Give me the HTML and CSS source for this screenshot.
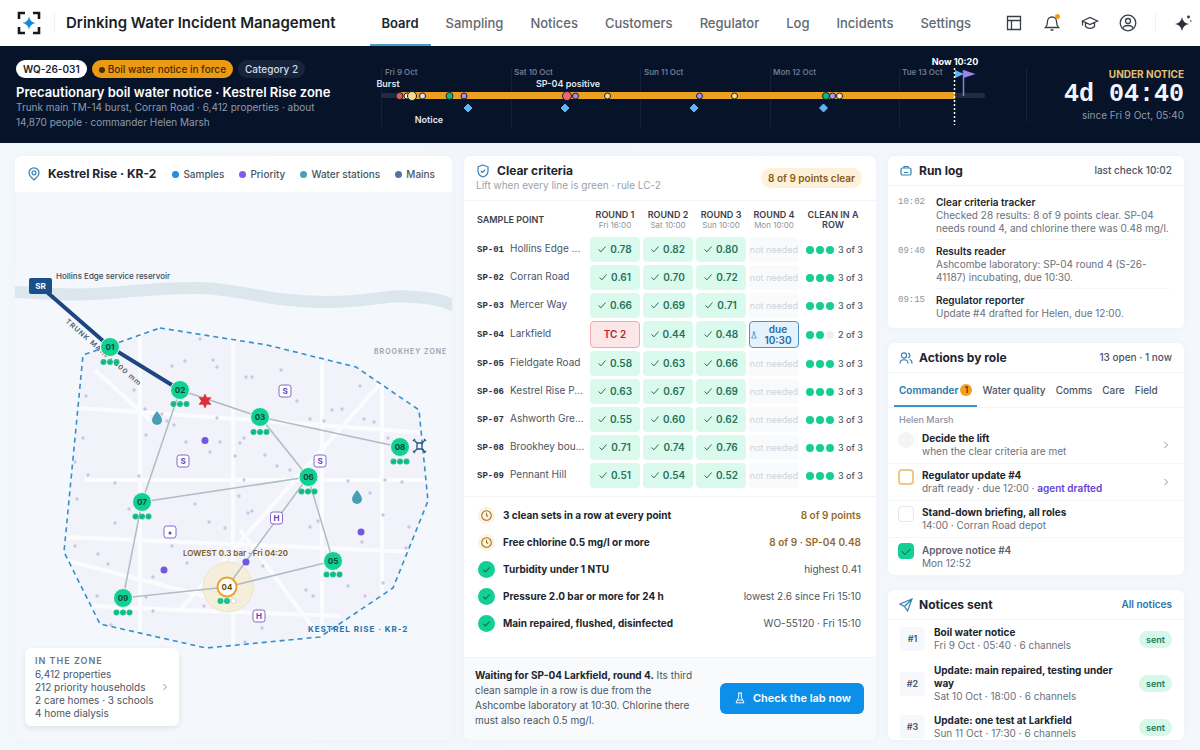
FILE: index.html
```html
<!DOCTYPE html>
<html lang="en">
<head>
<meta charset="utf-8">
<meta name="viewport" content="width=device-width, initial-scale=1">
<title>Drinking Water Incident Management</title>
<link rel="stylesheet" href="styles.css">
</head>
<body>
<header class="topbar">
  <svg class="logo" viewBox="0 0 24 24" aria-hidden="true"><path d="M2 8V2h6M16 2h6v6M22 16v6h-6M8 22H2v-6" fill="none" stroke="#14181f" stroke-width="2.6"/><path d="M12 5.500Q13 11 18.500 12Q13 13 12 18.500Q11 13 5.500 12Q11 11 12 5.500Z" fill="#1689dc"/></svg>
  <h1 class="brand">Drinking Water Incident Management</h1>
  <nav class="nav">
    <a class="nav-link active" href="#board">Board</a>
    <a class="nav-link" href="#sampling">Sampling</a>
    <a class="nav-link" href="#notices">Notices</a>
    <a class="nav-link" href="#customers">Customers</a>
    <a class="nav-link" href="#regulator">Regulator</a>
    <a class="nav-link" href="#log">Log</a>
    <a class="nav-link" href="#incidents">Incidents</a>
    <a class="nav-link" href="#settings">Settings</a>
  </nav>
  <div class="tools">
    <button class="tool" aria-label="Layout"><svg viewBox="0 0 18 18"><path d="M2.500 2.500h13v13h-13zM2.500 6.500h13M6.500 6.500v9"/></svg></button>
    <button class="tool" aria-label="Alerts"><svg viewBox="0 0 18 18"><path d="M2.500 13.500c1.500-1.500 2-2.500 2-6a4.500 4.500 0 0 1 9 0c0 3.500.500 4.500 2 6zM7.500 16h3"/><circle cx="14.500" cy="2.500" r="2.500" fill="#f39c12" stroke="none"/></svg></button>
    <button class="tool" aria-label="Training"><svg viewBox="0 0 18 18"><path d="M1.500 7 9 3.500 16.500 7 9 10.500zM4.500 8.500v4c2 2.500 7 2.500 9 0v-4M1.500 7.500v4"/></svg></button>
    <button class="tool" aria-label="Account"><svg viewBox="0 0 18 18"><circle cx="9" cy="9" r="7.800"/><circle cx="9" cy="7" r="2.500"/><path d="M4 14.500c.500-4 9.500-4 10 0"/></svg></button>
  </div>
  <button class="tool assist" aria-label="Assistant"><svg viewBox="0 0 18 18"><path d="M8 3Q9 9 15 10Q9 11 8 17Q7 11 1 10Q7 9 8 3Z" fill="#2c3038" stroke="none"/><circle cx="14.500" cy="3" r="1.400" fill="#2c3038" stroke="none"/><circle cx="16.800" cy="7" r=".8" fill="#2c3038" stroke="none"/></svg></button>
</header>

<section class="banner">
  <div class="incident">
    <div class="chips"><span class="chip id">WQ-26-031</span><span class="chip force">Boil water notice in force</span><span class="chip cat">Category 2</span></div>
    <h2 class="incident-title">Precautionary boil water notice · Kestrel Rise zone</h2>
    <p class="incident-text">Trunk main TM-14 burst, Corran Road · 6,412 properties · about 14,870 people · commander Helen Marsh</p>
  </div>
  <svg class="timeline" viewBox="370 46 640 97" role="img" aria-label="Incident timeline">
    <path d="M381.500 68v59M511.500 68v59M640.500 68v59M770.500 68v59M899.500 68v59" stroke="#15213a"/>
    <g class="tl-day"><text x="385" y="75">Fri 9 Oct</text><text x="514" y="75">Sat 10 Oct</text><text x="644" y="75">Sun 11 Oct</text><text x="773" y="75">Mon 12 Oct</text><text x="902" y="75">Tue 13 Oct</text></g>
    <rect x="381" y="93" width="604" height="5" rx="2" fill="#212c42"/>
    <rect x="400" y="92" width="555" height="7" fill="#eba11f"/>
    <g class="tl-label"><text x="388" y="87">Burst</text><text x="568" y="87">SP-04 positive</text><text x="429" y="123">Notice</text></g>
    <text class="tl-now" x="955" y="65">Now 10:20</text>
    <g stroke="#13203a">
      <circle cx="399.500" cy="96" r="3.500" fill="#e5584f"/><circle cx="407" cy="96" r="3" fill="#f1f5f9"/><circle cx="422.500" cy="96" r="3" fill="#e4dcf5"/><circle cx="412" cy="96" r="4.500" fill="#fbd98a"/>
      <circle cx="449.500" cy="96" r="3.500" fill="#10b981"/><circle cx="464" cy="96" r="3" fill="#a78bfa"/><circle cx="575.500" cy="96" r="3" fill="#b18ae0"/><circle cx="567" cy="96" r="4.500" fill="#f0646a"/><circle cx="607.500" cy="96" r="3" fill="#fbd98a"/>
      <circle cx="699.500" cy="96" r="3" fill="#a78bfa"/><circle cx="734.500" cy="96" r="3" fill="#fbd98a"/><circle cx="826" cy="96" r="3.500" fill="#10b981"/><circle cx="832.500" cy="96" r="3" fill="#b79af0"/><circle cx="839.500" cy="96" r="3" fill="#f7e2bd"/>
    </g>
    <path d="M468 104l4 4-4 4-4-4zM565 104l4 4-4 4-4-4zM694 104l4 4-4 4-4-4zM823.500 104l4 4-4 4-4-4z" fill="#62b5f4" stroke="#62b5f4" stroke-linejoin="round"/>
    <path d="M955 70l9 4-9 4z" fill="#5cb3f5"/><path d="M963.500 70v26" stroke="#8f7be0" stroke-width="1.500"/><path d="M963.500 70l12 4-12 4z" fill="#9a82ea"/>
    <path d="M954.500 68v57" stroke="#fff" stroke-width="1.500" stroke-dasharray="2 2"/>
  </svg>
  <div class="clock"><span class="clock-label">UNDER NOTICE</span><strong class="clock-time">4d 04:40</strong><span class="clock-since">since Fri 9 Oct, 05:40</span></div>
</section>

<main class="board">
  <section class="card map-card">
    <div class="map-head">
      <svg class="icon" viewBox="0 0 14 14"><path d="M7 13C4 10.500 2 8.500 2 5.800a5 5 0 0 1 10 0C12 8.500 10 10.500 7 13z"/><circle cx="7" cy="5.800" r="2"/></svg>
      <h3>Kestrel Rise · KR-2</h3>
      <ul class="legend"><li class="c-blue">Samples</li><li class="c-violet">Priority</li><li class="c-teal">Water stations</li><li class="c-slate">Mains</li></ul>
    </div>
    <div class="map-body">
      <svg class="map" viewBox="15 192 437 548" role="img" aria-label="Map of Kestrel Rise zone">
        <defs>
          <g id="dots"><circle cx="-6.500" r="3"/><circle r="3"/><circle cx="6.500" r="3"/><path d="M-8 0l1 1 2-2M-1.500 0l1 1 2-2M5 0l1 1 2-2" fill="none" stroke="#0a8f66" stroke-width=".8"/></g>
          <path id="drop" d="M0-7Q5-1 5 2A5 5 0 0 1-5 2Q-5-1 0-7Z"/>
          <rect id="tag" x="-6" y="-6" width="12" height="12" rx="2.500"/>
          <clipPath id="zone"><path d="M160 328 267 345 356 367 419 410 428 501 393 588 320 637 206 648 100 624 64 552 83 355Z"/></clipPath>
        </defs>
        <path d="M10 292C40 292 60 296 95 294S160 287 200 288 270 302 325 302 380 294 415 297 440 302 456 306" fill="none" stroke="#dbe7ed" stroke-width="12"/>
        <g clip-path="url(#zone)">
          <path d="M60 320h380v340H60z" fill="#f2f3fa"/>
          <g fill="none" stroke="#fbfcfe" stroke-width="4"><path d="M60 407 140 412 440 434M85 480h355M64 537 440 553M70 605 180 610 340 616M140 325V650M233 325V650M322 340V640M382 370V600M95 370 150 420M180 610 410 350M240 530 320 637M64 560 220 600"/></g>
        </g>
        <path d="M160 328 267 345 356 367 419 410 428 501 393 588 320 637 206 648 100 624 64 552 83 355Z" fill="none" stroke="#3490c8" stroke-width="1.600" stroke-dasharray="5 4"/>
        <g fill="#cbc5e6">
          <circle cx="200" cy="339" r="1.700"/><circle cx="172" cy="366" r="1.700"/><circle cx="185" cy="361" r="1.700"/><circle cx="213" cy="360" r="1.700"/><circle cx="217" cy="367" r="1.700"/><circle cx="86" cy="396" r="1.700"/><circle cx="134" cy="390" r="1.700"/><circle cx="145" cy="409" r="1.700"/><circle cx="162" cy="414" r="1.700"/><circle cx="167" cy="421" r="1.700"/><circle cx="174" cy="425" r="1.700"/><circle cx="146" cy="435" r="1.700"/><circle cx="83" cy="438" r="1.700"/><circle cx="217" cy="418" r="1.700"/><circle cx="186" cy="442" r="1.700"/><circle cx="220" cy="442" r="1.700"/><circle cx="210" cy="452" r="1.700"/><circle cx="235" cy="456" r="1.700"/><circle cx="75" cy="462" r="1.700"/><circle cx="88" cy="475" r="1.700"/><circle cx="139" cy="476" r="1.700"/><circle cx="115" cy="483" r="1.700"/><circle cx="77" cy="499" r="1.700"/><circle cx="129" cy="509" r="1.700"/><circle cx="195" cy="504" r="1.700"/><circle cx="115" cy="523" r="1.700"/><circle cx="209" cy="522" r="1.700"/><circle cx="225" cy="528" r="1.700"/><circle cx="246" cy="377" r="1.700"/><circle cx="252" cy="377" r="1.700"/><circle cx="281" cy="370" r="1.700"/><circle cx="297" cy="401" r="1.700"/><circle cx="332" cy="410" r="1.700"/><circle cx="342" cy="409" r="1.700"/><circle cx="360" cy="386" r="1.700"/><circle cx="310" cy="419" r="1.700"/><circle cx="324" cy="421" r="1.700"/><circle cx="364" cy="419" r="1.700"/><circle cx="374" cy="422" r="1.700"/><circle cx="388" cy="438" r="1.700"/><circle cx="244" cy="438" r="1.700"/><circle cx="240" cy="443" r="1.700"/><circle cx="265" cy="455" r="1.700"/><circle cx="277" cy="466" r="1.700"/><circle cx="290" cy="470" r="1.700"/><circle cx="348" cy="481" r="1.700"/><circle cx="385" cy="480" r="1.700"/><circle cx="402" cy="482" r="1.700"/><circle cx="370" cy="493" r="1.700"/><circle cx="383" cy="515" r="1.700"/><circle cx="409" cy="527" r="1.700"/><circle cx="244" cy="480" r="1.700"/><circle cx="239" cy="496" r="1.700"/><circle cx="248" cy="513" r="1.700"/><circle cx="252" cy="511" r="1.700"/><circle cx="310" cy="527" r="1.700"/><circle cx="318" cy="521" r="1.700"/><circle cx="75" cy="546" r="1.700"/><circle cx="98" cy="554" r="1.700"/><circle cx="108" cy="564" r="1.700"/><circle cx="187" cy="563" r="1.700"/><circle cx="153" cy="577" r="1.700"/><circle cx="97" cy="596" r="1.700"/><circle cx="146" cy="597" r="1.700"/><circle cx="153" cy="611" r="1.700"/><circle cx="111" cy="625" r="1.700"/><circle cx="204" cy="606" r="1.700"/><circle cx="172" cy="546" r="1.700"/><circle cx="362" cy="542" r="1.700"/><circle cx="263" cy="566" r="1.700"/><circle cx="246" cy="594" r="1.700"/><circle cx="306" cy="590" r="1.700"/><circle cx="313" cy="596" r="1.700"/><circle cx="348" cy="586" r="1.700"/><circle cx="365" cy="596" r="1.700"/><circle cx="383" cy="583" r="1.700"/><circle cx="406" cy="548" r="1.700"/><circle cx="262" cy="628" r="1.700"/><circle cx="245" cy="642" r="1.700"/>
        </g>
        <circle cx="228" cy="587" r="25" fill="#f5eedb" stroke="#f0e4c3"/>
        <path d="M142 502 308 477 260 417 180 390 142 502 123 598 227 587 308 477 333 561 227 587M260 417 400 447" fill="none" stroke="#aebcc6" stroke-width="1.500"/>
        <path d="M40 286 110 347 180 390" fill="none" stroke="#1d4580" stroke-width="4"/>
        <rect x="29" y="278" width="23" height="16" rx="2" fill="#1b4f8c"/>
        <text class="m-sr" x="40.500" y="289">SR</text>
        <text class="m-place" x="56" y="279">Hollins Edge service reservoir</text>
        <text class="m-trunk" transform="translate(65 322) rotate(41)">TRUNK MAIN · 600 mm</text>
        <text class="m-other" x="374" y="354">BROOKHEY ZONE</text>
        <text class="m-zone" x="308" y="632">KESTREL RISE · KR-2</text>
        <text class="m-low" x="183" y="556">LOWEST 0.3 bar · Fri 04:20</text>
        <path transform="translate(205 401)" d="M0-7 1.800-3.200 6-3.500 3.500 0 6 3.500 1.800 3.200 0 7-1.800 3.200-6 3.500-3.500 0-6-3.500-1.800-3.200Z" fill="#db2f3d" stroke="#db2f3d" stroke-width=".6"/>
        <use href="#drop" x="157" y="418" fill="#479fb5"/><use href="#drop" x="357" y="497" fill="#479fb5"/>
        <g fill="#7257e0"><circle cx="205" cy="440.500" r="3.500"/><circle cx="361" cy="532" r="3.500"/><circle cx="164" cy="570" r="3.500"/><circle cx="246" cy="562" r="3.500"/></g>
        <g fill="#fff" stroke="#8068c8"><use href="#tag" x="285" y="391"/><use href="#tag" x="183" y="461"/><use href="#tag" x="320" y="461"/><use href="#tag" x="276.500" y="518"/><use href="#tag" x="259" y="616"/><use href="#tag" x="170" y="532"/></g>
        <circle cx="170" cy="533" r="1.500" fill="#5b45b8"/>
        <g class="m-tag"><text x="285" y="394">S</text><text x="183" y="464">S</text><text x="320" y="464">S</text><text x="276.500" y="521">H</text><text x="259" y="619">H</text></g>
        <path d="M414 440l3 3h5l3-3M414 452l3-3h5l3 3M417 443v6M422 443v6M413 441l2-2M426 441l-2-2M413 451l2 2M426 451l-2 2" fill="none" stroke="#24507a" stroke-width="1.300"/>
        <g fill="#12cf92" stroke="#e9fbf4"><circle cx="110" cy="347" r="9.500"/><circle cx="180" cy="390" r="9.500"/><circle cx="260" cy="417" r="9.500"/><circle cx="308.500" cy="477" r="9.500"/><circle cx="400" cy="447" r="9.500"/><circle cx="142" cy="502" r="9.500"/><circle cx="333" cy="561" r="9.500"/><circle cx="123" cy="598" r="9.500"/></g>
        <circle cx="227" cy="587" r="9.500" fill="#fff" stroke="#eda226" stroke-width="2"/>
        <g fill="#19c38d"><use href="#dots" x="110" y="362"/><use href="#dots" x="180" y="404"/><use href="#dots" x="260" y="432"/><use href="#dots" x="308" y="491.500"/><use href="#dots" x="400" y="461.500"/><use href="#dots" x="142" y="516.500"/><use href="#dots" x="333" y="574.500"/><use href="#dots" x="123" y="612.500"/></g>
        <circle cx="220.500" cy="601" r="3" fill="#19c38d"/><circle cx="227" cy="601" r="3" fill="#19c38d"/><circle cx="233.500" cy="601" r="2.500" fill="#fff" stroke="#cbd5df"/>
        <g class="m-node"><text x="110" y="350">01</text><text x="180" y="393">02</text><text x="260" y="420">03</text><text x="308.500" y="480">06</text><text x="400" y="450">08</text><text x="142" y="505">07</text><text x="333" y="564">05</text><text x="123" y="601">09</text><text class="open" x="227" y="590">04</text></g>
      </svg>
      <button class="zone-info">
        <span class="zone-text"><span class="zone-label">IN THE ZONE</span><span>6,412 properties</span><span>212 priority households</span><span>2 care homes · 3 schools</span><span>4 home dialysis</span></span>
        <svg class="chev" viewBox="0 0 8 8"><path d="M2.500 1l3 3-3 3"/></svg>
      </button>
    </div>
  </section>

  <section class="card criteria">
    <div class="crit-head">
      <div>
        <h3 class="crit-title"><svg class="icon" viewBox="0 0 14 14"><path d="M7 1 12 2.800V7c0 3-2 5-5 6-3-1-5-3-5-6V2.800zM4.800 7l1.600 1.500L9.200 5.600"/></svg>Clear criteria</h3>
        <p class="crit-sub">Lift when every line is green · rule LC-2</p>
      </div>
      <span class="pill amber">8 of 9 points clear</span>
    </div>
    <table class="results">
      <thead><tr><th class="left">SAMPLE POINT</th><th>ROUND 1<small>Fri 16:00</small></th><th>ROUND 2<small>Sat 10:00</small></th><th>ROUND 3<small>Sun 10:00</small></th><th>ROUND 4<small>Mon 10:00</small></th><th class="clean">CLEAN IN A ROW</th></tr></thead>
      <tbody id="rows"></tbody>
    </table>
    <ul class="rules">
      <li><svg class="wait" viewBox="0 0 16 16"><circle cx="8" cy="8" r="4.500"/><path d="M8 5.500V8l1.500 1"/></svg><b>3 clean sets in a row at every point</b><span class="warn">8 of 9 points</span></li>
      <li><svg class="wait" viewBox="0 0 16 16"><circle cx="8" cy="8" r="4.500"/><path d="M8 5.500V8l1.500 1"/></svg><b>Free chlorine 0.5 mg/l or more</b><span class="warn">8 of 9 · SP-04 0.48</span></li>
      <li><svg class="done" viewBox="0 0 16 16"><path d="M5 8.200l2 2 4-4.200"/></svg><b>Turbidity under 1 NTU</b><span>highest 0.41</span></li>
      <li><svg class="done" viewBox="0 0 16 16"><path d="M5 8.200l2 2 4-4.200"/></svg><b>Pressure 2.0 bar or more for 24 h</b><span>lowest 2.6 since Fri 15:10</span></li>
      <li><svg class="done" viewBox="0 0 16 16"><path d="M5 8.200l2 2 4-4.200"/></svg><b>Main repaired, flushed, disinfected</b><span>WO-55120 · Fri 15:10</span></li>
    </ul>
    <div class="crit-foot">
      <p><b>Waiting for SP-04 Larkfield, round 4.</b> Its third clean sample in a row is due from the Ashcombe laboratory at 10:30. Chlorine there must also reach 0.5 mg/l.</p>
      <button class="primary"><svg viewBox="0 0 12 12"><path d="M4 1h4M4.700 1v4L2 10.800h8L7.300 5V1M3.300 8h5.400"/></svg>Check the lab now</button>
    </div>
  </section>

  <div class="side">
    <section class="card">
      <div class="side-head"><svg class="icon" viewBox="0 0 14 14"><rect x="2" y="4" width="10" height="7" rx="1.500"/><path d="M5 4V2.500h4V4M5 8.500h4"/></svg><h3>Run log</h3><span class="side-note">last check 10:02</span></div>
      <ol class="log">
        <li><time>10:02</time><div><b>Clear criteria tracker</b><p>Checked 28 results: 8 of 9 points clear. SP-04 needs round 4, and chlorine there was 0.48 mg/l.</p></div></li>
        <li><time>09:40</time><div><b>Results reader</b><p>Ashcombe laboratory: SP-04 round 4 (S-26-41187) incubating, due 10:30.</p></div></li>
        <li><time>09:15</time><div><b>Regulator reporter</b><p>Update #4 drafted for Helen, due 12:00.</p></div></li>
      </ol>
    </section>
    <section class="card">
      <div class="side-head"><svg class="icon" viewBox="0 0 14 14"><circle cx="5" cy="4.500" r="2.600"/><path d="M1 12.500c0-5 8-5 8 0M9 2a2.600 2.600 0 0 1 0 5M10.500 8.500c2 .500 2.500 2 2.500 4"/></svg><h3>Actions by role</h3><span class="side-note">13 open · 1 now</span></div>
      <div class="tabs"><button class="tab on">Commander<i>1</i></button><button class="tab">Water quality</button><button class="tab">Comms</button><button class="tab">Care</button><button class="tab">Field</button></div>
      <p class="owner">Helen Marsh</p>
      <ul class="tasks">
        <li><input class="box round" type="checkbox" id="t1" disabled><label for="t1"><b>Decide the lift</b><span>when the clear criteria are met</span></label><svg class="chev" viewBox="0 0 8 8"><path d="M2.500 1l3 3-3 3"/></svg></li>
        <li><input class="box due-box" type="checkbox" id="t2"><label for="t2"><b>Regulator update #4</b><span>draft ready · due 12:00 · <em>agent drafted</em></span></label><svg class="chev" viewBox="0 0 8 8"><path d="M2.500 1l3 3-3 3"/></svg></li>
        <li><input class="box" type="checkbox" id="t3"><label for="t3"><b>Stand-down briefing, all roles</b><span>14:00 · Corran Road depot</span></label></li>
        <li class="finished"><input class="box" type="checkbox" id="t4" checked><label for="t4"><b>Approve notice #4</b><span>Mon 12:52</span></label></li>
      </ul>
    </section>
    <section class="card">
      <div class="side-head"><svg class="icon" viewBox="0 0 14 14"><path d="M13 1 1 6l4.500 2.500L8.500 13zM13 1 5.500 8.500"/></svg><h3>Notices sent</h3><a class="side-link" href="#all">All notices</a></div>
      <ul class="sent-list">
        <li><span class="num">#1</span><div><b>Boil water notice</b><span>Fri 9 Oct · 05:40 · 6 channels</span></div><span class="pill sent">sent</span></li>
        <li><span class="num">#2</span><div><b>Update: main repaired, testing under way</b><span>Sat 10 Oct · 18:00 · 6 channels</span></div><span class="pill sent">sent</span></li>
        <li><span class="num">#3</span><div><b>Update: one test at Larkfield</b><span>Sun 11 Oct · 17:30 · 6 channels</span></div><span class="pill sent">sent</span></li>
      </ul>
    </section>
  </div>
</main>
<script src="app.js"></script>
</body>
</html>
```
FILE: styles.css
```css
* { box-sizing: border-box; }
body, h1, h2, h3, p, ul, ol { margin: 0; padding: 0; }
ul, ol { list-style: none; }
button { font: inherit; color: inherit; background: none; border: 0; padding: 0; cursor: pointer; }
a { color: inherit; text-decoration: none; }

body {
  min-height: 100vh;
  display: flex;
  flex-direction: column;
  font-family: Inter, "Liberation Sans", sans-serif;
  font-size: 10px;
  line-height: 13px;
  color: #4b5563;
  background: linear-gradient(100deg, #f1f9fb, #f3f6fb 50%, #f4f7fb);
}
b, h3 { color: #20252e; font-weight: 700; }
h3 { font-size: 12px; line-height: 16px; }

/* top bar */
.topbar { display: flex; align-items: center; height: 46px; padding: 0 8px 0 17px; background: #fff; }
.logo { width: 24px; height: 24px; flex: none; }
.brand { margin-left: 13px; padding-left: 11px; border-left: 1px solid #eef0f3; font-size: 15px; line-height: 20px; font-weight: 600; color: #1b1f27; white-space: nowrap; }
.nav { display: flex; align-self: stretch; gap: 3px; margin-left: 34px; }
.nav-link { display: flex; align-items: center; padding: 2px 12px 0; font-size: 13px; font-weight: 500; color: #626870; border-bottom: 2px solid transparent; }
.nav-link.active { font-weight: 600; color: #20252e; border-color: #4a9dcb; }
.tools { display: flex; gap: 20px; margin-left: auto; padding-right: 18px; border-right: 1px solid #eef0f3; }
.tool { width: 18px; height: 18px; }
.tool svg { display: block; width: 18px; height: 18px; fill: none; stroke: #3a3f47; stroke-width: 1.300; overflow: visible; }
.assist { margin-left: 18px; }

/* incident banner */
.banner { display: grid; grid-template-columns: 354px 1fr 174px; align-items: center; min-height: 97px; padding: 0 16px; background: #061329; }
.incident { padding-right: 40px; }
.chips { display: flex; gap: 5px; }
.chip { padding: 0 7px; border-radius: 9px; font-size: 10px; line-height: 18px; font-weight: 500; white-space: nowrap; }
.chip.id { background: #fff; color: #1d2430; font-weight: 600; }
.chip.force { background: #ec9a12; color: #472c05; }
.chip.force::before { content: ""; display: inline-block; width: 6px; height: 6px; margin-right: 3px; border-radius: 50%; background: #472c05; }
.chip.cat { background: #18243a; color: #d5dbe5; }
.incident-title { margin-top: 6px; font-size: 13px; line-height: 16px; font-weight: 600; color: #fff; white-space: nowrap; }
.incident-text { font-size: 10px; line-height: 15px; color: #8f9bad; }
.timeline { display: block; width: 100%; font-family: Inter, sans-serif; }
.tl-day { font-size: 8px; font-weight: 600; fill: #6d7a8e; }
.tl-label { font-size: 9px; font-weight: 600; fill: #e2e7ef; text-anchor: middle; }
.tl-now { font-size: 9px; font-weight: 700; fill: #fff; text-anchor: middle; }
.clock { display: flex; flex-direction: column; align-items: flex-end; margin-left: 16px; border-left: 1px solid #16233a; }
.clock-label { font-size: 10px; font-weight: 700; color: #e3bf72; }
.clock-time { font-family: "Liberation Mono", monospace; font-size: 25px; line-height: 28px; font-weight: 700; color: #f2f6fb; }
.clock-since { font-size: 10px; color: #8f9bad; }

/* board */
.board { flex: 1; display: grid; grid-template-columns: 437fr 412fr 296fr; gap: 12px; padding: 13px 16px 10px 15px; }
.card { background: #fff; border-radius: 6px; box-shadow: 0 0 4px #e6ecf388; }
.icon { width: 14px; height: 14px; flex: none; fill: none; stroke: #3481b4; stroke-width: 1.200; }
.chev { width: 8px; height: 8px; flex: none; fill: none; stroke: #8d949e; }
.pill { border-radius: 10px; font-weight: 600; white-space: nowrap; }
.pill.amber { padding: 0 7px; line-height: 20px; color: #8a5a12; background: #fdf1d9; }
.pill.sent { padding: 0 7px; font-size: 9px; line-height: 17px; color: #1d7a5c; background: #d5f8ea; }

/* map */
.map-card { display: flex; flex-direction: column; background: #f4f7fb; }
.map-head { display: flex; align-items: center; gap: 7px; min-height: 36px; padding: 0 17px 0 12px; background: #fff; border-radius: 6px 6px 0 0; }
.map-head h3 { white-space: nowrap; }
.legend { flex: 1; display: flex; justify-content: space-between; margin-left: 9px; font-weight: 500; white-space: nowrap; }
.legend li { display: flex; align-items: center; gap: 4px; color: #4b5563; }
.legend li::before { content: ""; width: 7px; height: 7px; border-radius: 50%; }
.legend .c-blue::before { background: #1e8fdb; }
.legend .c-violet::before { background: #7b5cf0; }
.legend .c-teal::before { background: #4a9fba; }
.legend .c-slate::before { background: #54759b; }
.map-body { position: relative; flex: 1; }
.map { display: block; width: 100%; font-family: Inter, sans-serif; }
.m-sr { font-size: 8px; font-weight: 700; fill: #fff; text-anchor: middle; }
.m-place { font-size: 8px; font-weight: 500; fill: #3f4a58; }
.m-trunk { font-size: 7px; font-weight: 600; letter-spacing: 1px; fill: #4d5c70; }
.m-other { font-size: 7px; font-weight: 600; letter-spacing: 1px; fill: #9aa1ab; }
.m-zone { font-size: 8px; font-weight: 700; letter-spacing: 1px; fill: #2672a8; }
.m-low { font-size: 8px; font-weight: 600; fill: #7a5a1c; }
.m-tag { font-size: 8px; font-weight: 700; fill: #5b45b8; text-anchor: middle; }
.m-node { font-size: 8px; font-weight: 700; fill: #0b4a3a; text-anchor: middle; }
.m-node .open { fill: #6b4a12; }
.zone-info { position: absolute; left: 10px; bottom: 14px; display: flex; align-items: center; width: 154px; padding: 6px 10px; text-align: left; background: #fff; border-radius: 6px; box-shadow: 0 2px 5px #dde4ec; }
.zone-text { flex: 1; display: flex; flex-direction: column; white-space: nowrap; }
.zone-label { font-size: 9px; line-height: 14px; font-weight: 600; letter-spacing: 1px; color: #66758a; }

/* clear criteria */
.criteria { display: flex; flex-direction: column; }
.crit-head { display: flex; align-items: center; justify-content: space-between; padding: 7px 14px 8px 12px; border-bottom: 1px solid #f1f3f6; }
.crit-title { display: flex; align-items: center; gap: 7px; }
.crit-sub { color: #9aa1ab; }
.results { width: calc(100% - 19px); margin: 2px 9px 5px 10px; border-collapse: separate; border-spacing: 3px; table-layout: fixed; }
.results th { padding: 0; width: 50px; height: 28px; font-size: 9px; line-height: 10px; font-weight: 600; color: #3a414c; white-space: nowrap; }
.results th.left { width: 110px; text-align: left; }
.results th.clean { width: auto; white-space: normal; }
.results small { display: block; font-size: 8px; font-weight: 400; color: #8d949e; }
.results td { padding: 0; height: 25px; text-align: center; border-radius: 4px; white-space: nowrap; }
.results .pt { text-align: left; }
.pt code { margin-right: 6px; font-family: "Liberation Mono", monospace; font-size: 9px; font-weight: 700; color: #2b313b; }
.ok { background: #dbfaee; color: #23735a; font-weight: 600; }
.tick { width: 8px; height: 8px; margin-right: 4px; fill: none; stroke: #23735a; }
.results .none { font-size: 9px; color: #ced2d9; background: #f9fafc; }
.results .bad { color: #b5262d; font-weight: 600; background: #fde6e8; border: 1px solid #efa9ae; }
.results .due { height: 27px; color: #1f6ba5; font-weight: 600; line-height: 11px; background: #e3f2fd; border: 1px solid #4a93c9; }
.due-in { display: flex; align-items: center; justify-content: space-between; padding-right: 5px; white-space: normal; }
.due-in svg { width: 8px; height: 8px; fill: none; stroke: #6ba3cc; }
.due-in span { width: 30px; }
.results .score { padding-left: 4px; }
.score-in { display: flex; align-items: center; gap: 2px; font-size: 9px; font-weight: 500; }
.score-in i { width: 8px; height: 8px; border-radius: 50%; background: #14cf93; }
.score-in i.off { background: #eef0f3; }
.score-in span { margin-left: 2px; }
.rules { padding: 5px 15px 0 14px; border-top: 1px solid #f1f3f6; }
.rules li { display: flex; align-items: center; min-height: 27px; }
.rules li b { flex: 1; margin-left: 8px; }
.rules svg { width: 17px; height: 17px; border-radius: 50%; fill: none; }
.wait { background: #fdf3df; stroke: #9a6c1f; }
.done { background: #12d093; stroke: #0b7a5a; stroke-width: 1.200; }
.warn { font-weight: 600; color: #94692a; }
.crit-foot { display: flex; align-items: center; justify-content: space-between; gap: 12px; margin-top: auto; padding: 10px 12px 12px 11px; line-height: 15px; background: #f8fafc; border-top: 1px solid #f1f3f6; border-radius: 0 0 6px 6px; }
.crit-foot p { max-width: 224px; }
.primary { display: flex; align-items: center; gap: 7px; padding: 8px 13px 8px 14px; font-size: 11px; font-weight: 600; color: #fff; background: #0b8fe8; border-radius: 6px; white-space: nowrap; }
.primary svg { width: 12px; height: 12px; fill: none; stroke: #fff; }

/* side column */
.side { display: flex; flex-direction: column; gap: 15px; }
.side-head { display: flex; align-items: center; gap: 6px; min-height: 30px; padding: 0 12px 0 11px; border-bottom: 1px solid #f1f3f6; }
.side-note { margin-left: auto; font-weight: 500; }
.side-link { margin-left: auto; font-weight: 600; color: #1f76b0; }
.log { padding: 5px 14px 4px 10px; }
.log li { display: flex; }
.log time { width: 38px; flex: none; font-family: "Liberation Mono", monospace; font-size: 9px; color: #8d949e; }
.log li div { flex: 1; padding: 5px 0 4px; border-bottom: 1px solid #f4f6f9; }
.log li time { padding-top: 5px; }
.log li:last-child div { border-bottom: 0; }
.log b { font-weight: 600; }
.log p { color: #6a717c; }
.tabs { display: flex; padding: 0 6px; border-bottom: 1px solid #f1f3f6; }
.tab { display: flex; align-items: center; gap: 2px; min-height: 34px; padding: 2px 5px 0; font-weight: 500; border-bottom: 2px solid transparent; white-space: nowrap; }
.tab.on { color: #1f76b0; font-weight: 600; border-color: #3a93cc; }
.tab i { width: 12px; font-size: 9px; line-height: 12px; font-style: normal; text-align: center; color: #5a3a08; background: #f2a01d; border-radius: 50%; }
.owner { padding: 6px 11px 1px; font-size: 9px; line-height: 12px; font-weight: 500; color: #8d949e; }
.tasks li { display: flex; align-items: center; gap: 8px; min-height: 37px; padding: 5px 14px 5px 10px; border-bottom: 1px solid #f5f7f9; }
.tasks li:last-child { border-bottom: 0; }
.tasks label { flex: 1; display: flex; flex-direction: column; color: #6a717c; }
.tasks em { font-style: normal; font-weight: 600; color: #6244d8; }
.tasks .finished b { font-weight: 600; color: #5b626d; }
.box { appearance: none; flex: none; align-self: flex-start; width: 16px; height: 16px; margin: 0; border: 1px solid #e3e6ea; border-radius: 4px; background: #fff; }
.box.round { border-color: #f1f2f4; border-radius: 8px; background: #f3f4f6; }
.box.due-box { border: 2px solid #ecca85; }
.box:checked { border-color: #12d093; background: #12d093; }
.box:checked::before { content: ""; display: block; width: 7px; height: 4px; margin: 4px 0 0 3px; border: solid #0b7a5a; border-width: 0 0 1px 1px; transform: rotate(-45deg); }
.sent-list li { display: flex; align-items: center; gap: 9px; padding: 6px 12px; }
.sent-list li:last-child { padding: 5px 12px 0; }
.sent-list li div { flex: 1; display: flex; flex-direction: column; color: #6a717c; }
.num { width: 25px; font-size: 9px; line-height: 24px; font-weight: 600; text-align: center; background: #f6f8fb; border-radius: 4px; }
```
FILE: app.js
```js
const points = [
  ["SP-01", "Hollins Edge ...", "0.78", "0.82", "0.80"],
  ["SP-02", "Corran Road", "0.61", "0.70", "0.72"],
  ["SP-03", "Mercer Way", "0.66", "0.69", "0.71"],
  ["SP-04", "Larkfield", "TC 2", "0.44", "0.48"],
  ["SP-05", "Fieldgate Road", "0.58", "0.63", "0.66"],
  ["SP-06", "Kestrel Rise P...", "0.63", "0.67", "0.69"],
  ["SP-07", "Ashworth Gre...", "0.55", "0.60", "0.62"],
  ["SP-08", "Brookhey bou...", "0.71", "0.74", "0.76"],
  ["SP-09", "Pennant Hill", "0.51", "0.54", "0.52"]
];
const tick = '<svg class="tick" viewBox="0 0 8 8"><path d="M0.500 4.500 3 6.800 7.500 1.500"/></svg>';
const due = '<td class="due"><div class="due-in"><svg viewBox="0 0 8 8"><path d="M3 1h2M3.300 1v3L1.500 7h5L4.700 4V1"/></svg><span>due 10:30</span></div></td>';
const cell = v => v.startsWith("TC") ? `<td class="bad">${v}</td>` : `<td class="ok">${tick}${v}</td>`;

document.getElementById("rows").innerHTML = points.map(([id, name, ...rounds]) => {
  const failed = rounds[0].startsWith("TC");
  const last = failed ? due : '<td class="none">not needed</td>';
  const dots = `<i></i><i></i><i class="${failed ? "off" : ""}"></i><span>${failed ? 2 : 3} of 3</span>`;
  return `<tr><td class="pt"><code>${id}</code>${name}</td>${rounds.map(cell).join("")}${last}<td class="score"><div class="score-in">${dots}</div></td></tr>`;
}).join("");
```
